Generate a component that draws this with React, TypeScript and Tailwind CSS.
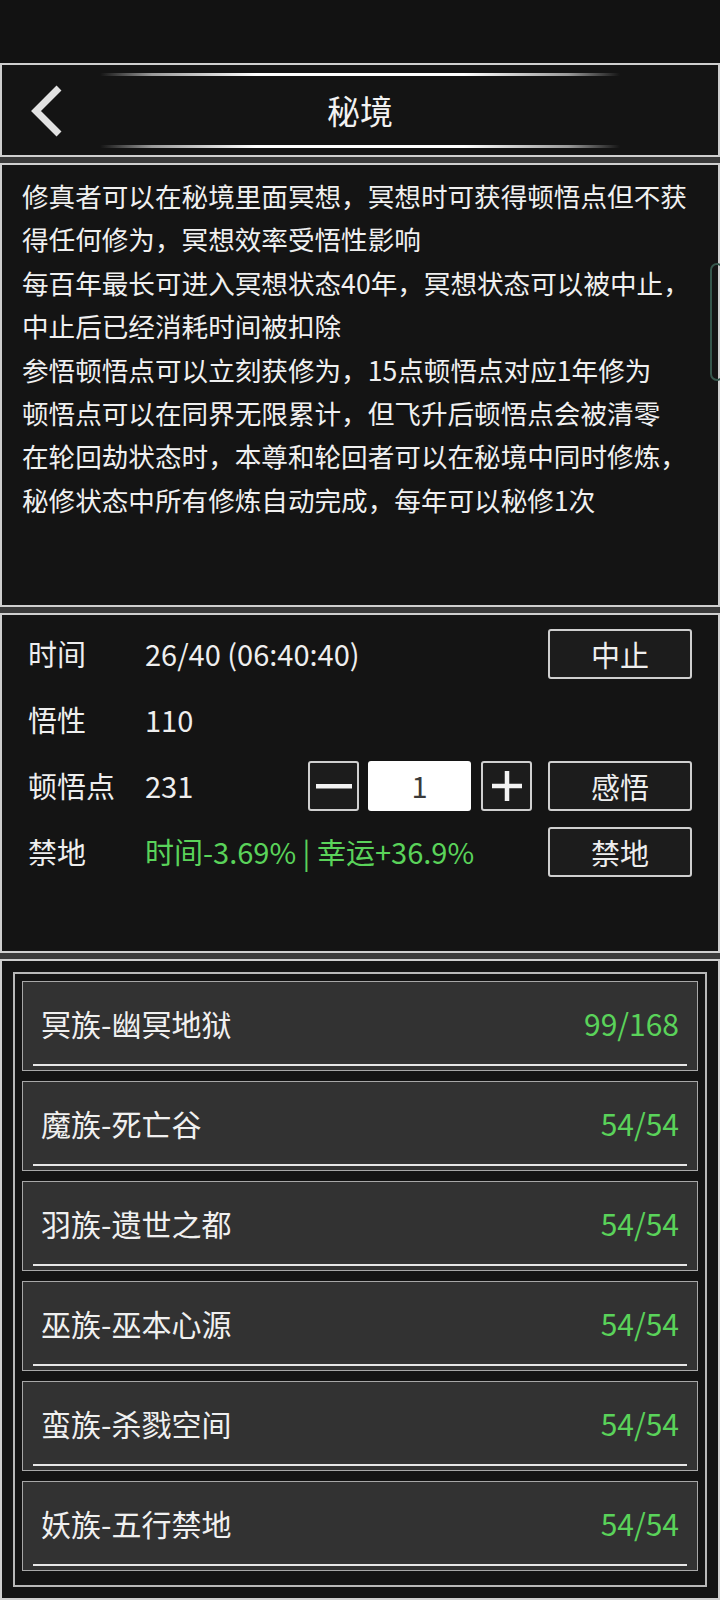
const intro = [
  '修真者可以在秘境里面冥想，冥想时可获得顿悟点但不获',
  '得任何修为，冥想效率受悟性影响',
  '每百年最长可进入冥想状态40年，冥想状态可以被中止，',
  '中止后已经消耗时间被扣除',
  '参悟顿悟点可以立刻获修为，15点顿悟点对应1年修为',
  '顿悟点可以在同界无限累计，但飞升后顿悟点会被清零',
  '在轮回劫状态时，本尊和轮回者可以在秘境中同时修炼，',
  '秘修状态中所有修炼自动完成，每年可以秘修1次',
];

const realms = [
  { name: '冥族-幽冥地狱', count: '99/168' },
  { name: '魔族-死亡谷', count: '54/54' },
  { name: '羽族-遗世之都', count: '54/54' },
  { name: '巫族-巫本心源', count: '54/54' },
  { name: '蛮族-杀戮空间', count: '54/54' },
  { name: '妖族-五行禁地', count: '54/54' },
];

function ActionButton({ label }: { label: string }) {
  return (
    <button className="w-[144px] h-[50px] shrink-0 rounded-[3px] border-2 border-[#cfcfcf] bg-[#1c1c1c] text-[29px] text-[#eeeeee] leading-none">
      {label}
    </button>
  );
}

function StepButton({ children }: { children: React.ReactNode }) {
  return (
    <button className="w-[51px] h-[50px] shrink-0 rounded-[3px] border-2 border-[#cfcfcf] bg-[#1c1c1c] flex items-center justify-center">
      {children}
    </button>
  );
}

export default function App() {
  return (
    <div
      className="w-[720px] h-[1600px] bg-[#121212] flex flex-col overflow-hidden"
      style={{ fontFamily: '"Noto Sans CJK SC", "Noto Sans", sans-serif' }}
    >
      <div className="h-[63px] shrink-0 bg-[#121212]" />

      <div className="flex-1 flex flex-col gap-[6px] bg-[#3a3a3a]">
        {/* Header */}
        <div className="h-[94px] shrink-0 border-2 border-[#cfcfcf] bg-[#141414] grid grid-cols-[98px_1fr_98px]">
          <div className="flex items-center pl-[26px]">
            <svg width="38" height="52" viewBox="0 0 38 52" className="mt-[1px]">
              <polyline points="31,3 8,26 31,49" fill="none" stroke="#e2e2e2" strokeWidth="7" strokeLinejoin="miter" />
            </svg>
          </div>
          <div className="flex flex-col justify-between pt-[8px] pb-[7px]">
            <div className="h-[3px] bg-[linear-gradient(90deg,transparent,#9a9a9a_10%,#ffffff_30%,#ffffff_70%,#9a9a9a_90%,transparent)]" />
            <div className="text-center text-[33px] leading-none text-[#f2f2f2]">秘境</div>
            <div className="h-[3px] bg-[linear-gradient(90deg,transparent,#9a9a9a_10%,#ffffff_30%,#ffffff_70%,#9a9a9a_90%,transparent)]" />
          </div>
          <div />
        </div>

        {/* Intro */}
        <div className="relative h-[444px] shrink-0 border-2 border-[#cfcfcf] bg-[#141414] pl-[20px] pt-[9px]">
          {intro.map((line, i) => (
            <div key={i} className="whitespace-nowrap text-[26.6px] leading-[43.4px] text-[#f0f0f0]">
              {line}
            </div>
          ))}
          <div className="absolute right-[-6px] top-[98px] w-[14px] h-[118px] rounded-full border-2 border-[#36574c]" />
        </div>

        {/* Stats */}
        <div className="h-[340px] shrink-0 border-2 border-[#cfcfcf] bg-[#141414] pt-[6px] pl-[26px] pr-[26px] text-[29px] text-[#eeeeee]">
          <div className="h-[66px] flex items-center">
            <span className="w-[117px] shrink-0">时间</span>
            <span className="flex-1">26/40 (06:40:40)</span>
            <ActionButton label="中止" />
          </div>
          <div className="h-[66px] flex items-center">
            <span className="w-[117px] shrink-0">悟性</span>
            <span className="flex-1">110</span>
          </div>
          <div className="h-[66px] flex items-center">
            <span className="w-[117px] shrink-0">顿悟点</span>
            <span className="flex-1">231</span>
            <StepButton>
              <svg width="36" height="6" viewBox="0 0 36 6">
                <rect x="0" y="1" width="36" height="4.5" fill="#f2f2f2" />
              </svg>
            </StepButton>
            <div className="ml-[9px] w-[103px] h-[50px] shrink-0 rounded-[3px] bg-white flex items-center justify-center text-[29px] text-[#3a3a3a]">
              1
            </div>
            <div className="ml-[10px]">
              <StepButton>
                <svg width="30" height="30" viewBox="0 0 30 30">
                  <rect x="0" y="12.75" width="30" height="4.5" fill="#f2f2f2" />
                  <rect x="12.75" y="0" width="4.5" height="30" fill="#f2f2f2" />
                </svg>
              </StepButton>
            </div>
            <div className="ml-[16px]">
              <ActionButton label="感悟" />
            </div>
          </div>
          <div className="h-[66px] flex items-center">
            <span className="w-[117px] shrink-0">禁地</span>
            <span className="flex-1 text-[#5ad35a]">时间-3.69% | 幸运+36.9%</span>
            <ActionButton label="禁地" />
          </div>
        </div>

        {/* Realm list */}
        <div className="flex-1 border-2 border-[#cfcfcf] bg-[#141414] p-[11px]">
          <div className="h-full border-2 border-[#b8b8b8] px-[7px] pt-[7px] flex flex-col gap-[10px]">
            {realms.map((r) => (
              <div key={r.name} className="h-[90px] shrink-0 border border-[#a8a8a8] bg-[#323232] flex flex-col">
                <div className="flex-1 flex items-center justify-between pl-[18px] pr-[18px] text-[30px]">
                  <span className="text-[#f0f0f0]">{r.name}</span>
                  <span className="text-[#5ad35a]">{r.count}</span>
                </div>
                <div className="mx-[10px] mb-[4px] h-[2px] bg-[#e6e6e6]" />
              </div>
            ))}
          </div>
        </div>
      </div>
    </div>
  );
}
